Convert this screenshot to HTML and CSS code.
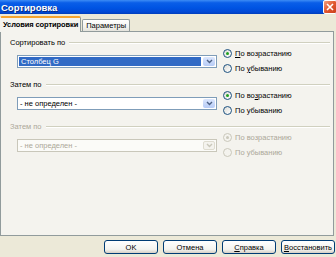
FILE: index.html
```html
<!DOCTYPE html>
<html lang="ru">
<head>
    <meta charset="UTF-8">
    <title>Сортировка</title>
    <link rel="stylesheet" href="styles.css">
</head>
<body>
    <div class="window">
        <div class="titlebar">
            <span class="title">Сортировка</span>
            <span class="close">
                <svg width="8" height="8" viewBox="0 0 8 8"><path d="M1 1 L7 7 M7 1 L1 7" stroke="#fff" stroke-width="1.6"/></svg>
            </span>
        </div>

        <div class="tabbar">
            <div class="tab active">Условия сортировки</div>
            <div class="tab">Параметры</div>
        </div>

        <div class="panel">
            <div class="group">
                <div class="group-title">Сортировать по</div>
                <div class="group-body">
                    <div class="combo">
                        <span class="combo-text sel">Столбец G</span>
                        <span class="combo-btn"><svg width="7" height="5" viewBox="0 0 7 5"><path d="M1 1 L3.5 3.5 L6 1" fill="none" stroke="#4d6185" stroke-width="1.4"/></svg></span>
                    </div>
                    <div class="radios">
                        <label class="radio checked"><span class="dot"></span><span><u>П</u>о возрастанию</span></label>
                        <label class="radio"><span class="dot"></span><span>По <u>у</u>быванию</span></label>
                    </div>
                </div>
            </div>

            <div class="group">
                <div class="group-title">Затем по</div>
                <div class="group-body">
                    <div class="combo">
                        <span class="combo-text">- не определен -</span>
                        <span class="combo-btn"><svg width="7" height="5" viewBox="0 0 7 5"><path d="M1 1 L3.5 3.5 L6 1" fill="none" stroke="#4d6185" stroke-width="1.4"/></svg></span>
                    </div>
                    <div class="radios">
                        <label class="radio checked"><span class="dot"></span><span>По во<u>з</u>растанию</span></label>
                        <label class="radio"><span class="dot"></span><span>По убыванию</span></label>
                    </div>
                </div>
            </div>

            <div class="group disabled">
                <div class="group-title">Затем по</div>
                <div class="group-body">
                    <div class="combo">
                        <span class="combo-text">- не определен -</span>
                        <span class="combo-btn"><svg width="7" height="5" viewBox="0 0 7 5"><path d="M1 1 L3.5 3.5 L6 1" fill="none" stroke="#c9c7ba" stroke-width="1.4"/></svg></span>
                    </div>
                    <div class="radios">
                        <label class="radio checked"><span class="dot"></span><span>По возрастанию</span></label>
                        <label class="radio"><span class="dot"></span><span>По убыванию</span></label>
                    </div>
                </div>
            </div>
        </div>

        <div class="buttons">
            <button class="btn">OK</button>
            <button class="btn">Отмена</button>
            <button class="btn"><u>С</u>правка</button>
            <button class="btn"><u>В</u>осстановить</button>
        </div>

        <div class="sheet">
            <div class="cell"></div>
            <div class="cell"></div>
            <div class="cell"></div>
            <div class="cell"></div>
            <div class="cell"></div>
            <div class="cell"></div>
            <div class="cell"></div>
        </div>
    </div>
</body>
</html>
```

FILE: styles.css
```css
body {
    margin: 0;
    font-family: "Liberation Sans", Arial, sans-serif;
    font-size: 7.5px;
    color: #000;
}
.window {
    width: 336px;
    height: 257px;
    overflow: hidden;
    background: #ece9d8;
    display: flex;
    flex-direction: column;
}
.titlebar {
    height: 14px;
    flex: none;
    display: flex;
    align-items: center;
    justify-content: space-between;
    padding-left: 1px;
    background: linear-gradient(#3d8cf5 0%, #0a5ee8 20%, #0054e3 55%, #0149d6 85%, #003dbb 100%);
}
.title {
    color: #fff;
    font-weight: bold;
    font-size: 9.5px;
    text-shadow: 1px 1px 0 #0a2a80;
}
.close {
    width: 12px;
    height: 12px;
    margin-right: -1px;
    border: 1px solid #fff;
    border-radius: 2px;
    background: linear-gradient(135deg, #f0a283 0%, #e2572f 50%, #c9401d 100%);
    display: flex;
    align-items: center;
    justify-content: center;
}
.tabbar {
    height: 17px;
    flex: none;
    display: flex;
    align-items: flex-end;
    position: relative;
    z-index: 1;
}
.tab {
    height: 11px;
    padding: 0 3px;
    line-height: 11px;
    white-space: nowrap;
    border: 1px solid #919b9c;
    border-bottom: none;
    border-radius: 2px 2px 0 0;
    background: linear-gradient(#fff, #f3f3ef 60%, #e4e3dc);
    margin-left: 1px;
}
.tab.active {
    height: 14px;
    line-height: 14px;
    padding: 0 2px;
    margin-left: 0;
    font-weight: bold;
    letter-spacing: -0.1px;
    background: #f4f3ee;
    border-top: 2px solid #f6a42e;
    margin-bottom: -1px;
    border-left-color: #f4f3ee;
}
.panel {
    height: 195px;
    flex: none;
    margin-right: 2px;
    padding-top: 8px;
    border: 1px solid #919b9c;
    background: #f4f3ee;
}
.group {
    margin-bottom: 6px;
}
.group-title {
    height: 6px;
    line-height: 6px;
    padding-left: 9px;
    display: flex;
    align-items: center;
    white-space: nowrap;
}
.group-title::after {
    content: "";
    flex: 1;
    margin: 0 3px 0 4px;
    border-top: 1px solid #d0d0bf;
    border-bottom: 1px solid #fff;
}
.group-body {
    height: 30px;
    display: flex;
    padding-left: 16px;
}
.combo {
    width: 198px;
    height: 11px;
    margin-top: 9px;
    border: 1px solid #7f9db9;
    background: #fff;
    display: flex;
    padding: 0;
}
.combo-text {
    flex: 1;
    padding-left: 2px;
    line-height: 11px;
    white-space: nowrap;
}
.combo-text.sel {
    background: #316ac5;
    color: #fff;
    margin: 1px;
    line-height: 9px;
}
.combo-btn {
    width: 12px;
    margin: 1px;
    border-radius: 2px;
    background: linear-gradient(#dbe6fd, #b6cbf6);
    display: flex;
    align-items: center;
    justify-content: center;
}
.radios {
    margin-left: 6px;
    display: flex;
    flex-direction: column;
}
.radio {
    height: 15px;
    display: flex;
    align-items: center;
    gap: 3px;
    white-space: nowrap;
}
.dot {
    width: 7px;
    height: 7px;
    border: 1px solid #1c5180;
    border-radius: 50%;
    background: linear-gradient(135deg, #dcdcd7, #fff);
    display: flex;
    align-items: center;
    justify-content: center;
}
.radio.checked .dot::after {
    content: "";
    width: 3px;
    height: 3px;
    border-radius: 50%;
    background: #21a121;
}
.disabled {
    color: #aca899;
}
.disabled .combo {
    border-color: #c9c7ba;
    background: #fbfbf8;
}
.disabled .combo-btn {
    background: #f4f3ee;
    border: 1px solid #dedcd0;
    width: 10px;
}
.disabled .dot {
    border-color: #cac8bb;
    background: #f4f3ee;
}
.disabled .radio.checked .dot::after {
    background: #cac8bb;
}
.buttons {
    height: 22px;
    flex: none;
    display: flex;
    justify-content: flex-end;
    align-items: flex-start;
    gap: 5px;
    padding: 4px 1px 0 0;
    box-sizing: border-box;
}
.btn {
    width: 54px;
    height: 14px;
    padding: 0;
    font-family: inherit;
    font-size: 7.5px;
    border: 1px solid #003c74;
    border-radius: 3px;
    background: linear-gradient(#fff, #f3f3ef 70%, #d6d0c5);
    color: #000;
}
.sheet {
    flex: 1;
    display: grid;
    grid-template-columns: 49px 55px 50px 52px 50px 50px 1fr;
    border-top: 2px solid #1c3d9c;
    background: #fff;
}
.cell {
    border-right: 1px solid #c8c8c8;
}
```
